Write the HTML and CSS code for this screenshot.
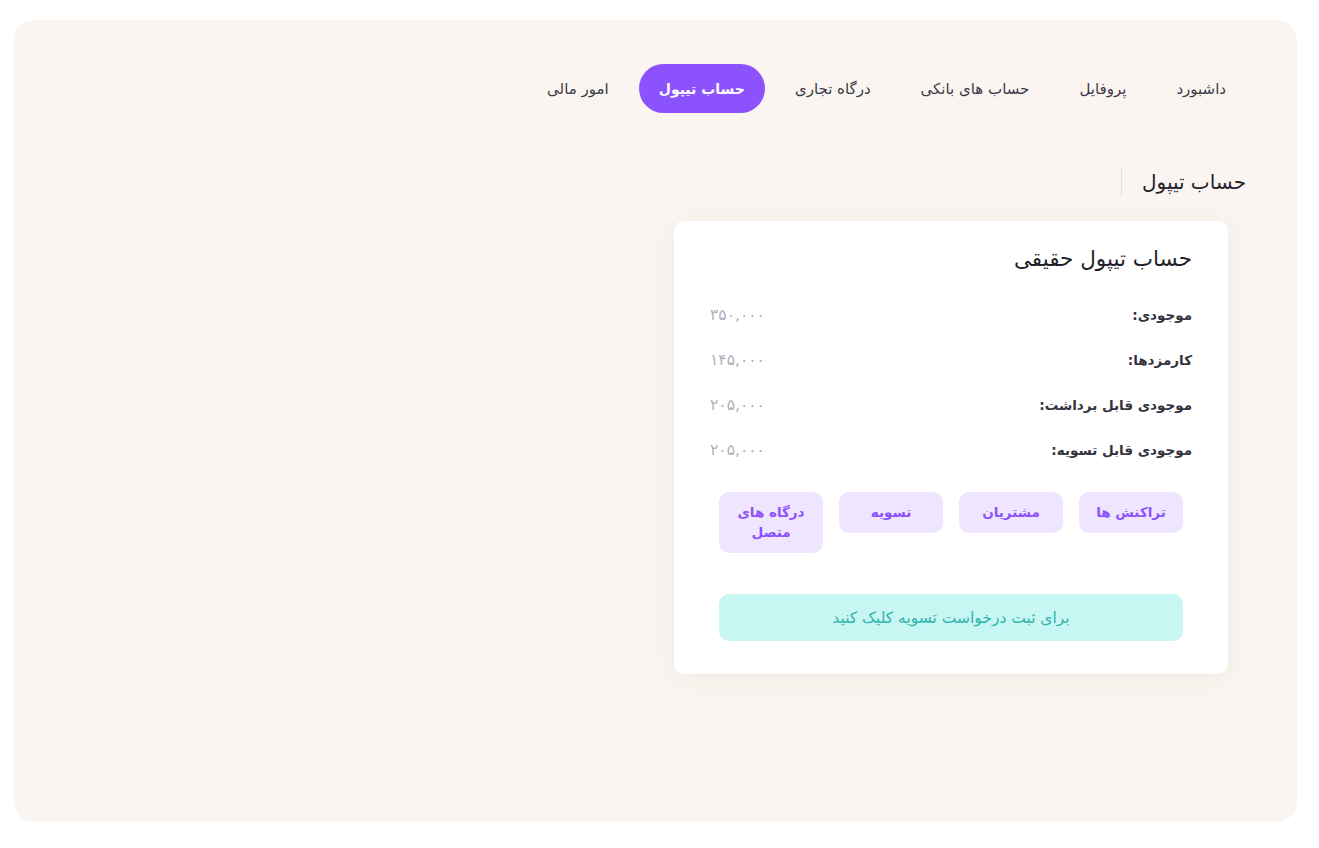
FILE: index.html
```html
<!DOCTYPE html>
<html lang="fa" dir="rtl">
<head>
<meta charset="utf-8">
<title>حساب تیپول</title>
<link rel="stylesheet" href="styles.css">
</head>
<body>
<div class="panel">
  <nav class="nav">
    <a class="nav-item">داشبورد</a>
    <a class="nav-item">پروفایل</a>
    <a class="nav-item">حساب های بانکی</a>
    <a class="nav-item">درگاه تجاری</a>
    <a class="nav-item active">حساب تیپول</a>
    <a class="nav-item">امور مالی</a>
  </nav>
  <div class="heading">حساب تیپول</div>
  <section class="card">
    <h2 class="card-title">حساب تیپول حقیقی</h2>
    <div class="rows">
      <div class="row"><span class="label">موجودی:</span><span class="value">۳۵۰,۰۰۰</span></div>
      <div class="row"><span class="label">کارمزدها:</span><span class="value">۱۴۵,۰۰۰</span></div>
      <div class="row"><span class="label">موجودی قابل برداشت:</span><span class="value">۲۰۵,۰۰۰</span></div>
      <div class="row"><span class="label">موجودی قابل تسویه:</span><span class="value">۲۰۵,۰۰۰</span></div>
    </div>
    <div class="actions">
      <button class="action">تراکنش ها</button>
      <button class="action">مشتریان</button>
      <button class="action">تسویه</button>
      <button class="action">درگاه های متصل</button>
    </div>
    <button class="settle">برای ثبت درخواست تسویه کلیک کنید</button>
  </section>
</div>
</body>
</html>
```
FILE: styles.css
```css
* { box-sizing: border-box; }
html, body { margin: 0; padding: 0; background: #ffffff; }
body {
  font-family: "DejaVu Sans", "Noto Sans", sans-serif;
  color: #333340;
}
.panel {
  margin: 20px 22px 0 14px;
  height: 802px;
  background: #faf5f0;
  border-radius: 20px;
  padding: 44px 51px 0 0;
  display: flex;
  flex-direction: column;
  align-items: flex-start;
}
.nav {
  display: flex;
  gap: 10px;
  height: 49px;
}
.nav-item {
  display: flex;
  align-items: center;
  padding: 0 20px;
  height: 49px;
  border-radius: 25px;
  font-size: 15px;
  color: #3b3b48;
  white-space: nowrap;
}
.nav-item.active {
  background: #8b52fd;
  color: #ffffff;
  font-weight: bold;
  font-size: 14px;
}
.heading {
  margin-top: 55px;
  padding-left: 20px;
  border-left: 1px solid #e6e1dc;
  line-height: 29px;
  font-size: 20px;
  color: #23232e;
}
.card {
  margin-top: 24px;
  margin-right: 18px;
  width: 554px;
  background: #ffffff;
  border-radius: 10px;
  box-shadow: 0 4px 30px rgba(120, 100, 80, 0.08);
  padding: 23px 36px 33px 36px;
}
.card-title {
  margin: 0;
  font-weight: normal;
  font-size: 21.5px;
  line-height: 30px;
  color: #1f1f2a;
}
.rows { margin-top: 18px; }
.row {
  display: flex;
  justify-content: space-between;
  align-items: center;
  height: 45px;
}
.label {
  font-size: 13.5px;
  font-weight: bold;
  color: #34343f;
}
.value {
  font-size: 15.5px;
  color: #b3afba;
}
.actions {
  margin-top: 20px;
  padding: 0 9px;
  display: grid;
  grid-template-columns: repeat(4, 104px);
  gap: 16px;
  align-items: start;
}
.action {
  font-family: inherit;
  border: none;
  background: #efe5fe;
  color: #8b52fd;
  font-weight: bold;
  font-size: 13.5px;
  line-height: 20px;
  padding: 10px 8px 11px;
  border-radius: 10px;
}
.settle {
  display: block;
  margin: 41px 9px 0;
  width: calc(100% - 18px);
  height: 47px;
  border: none;
  border-radius: 10px;
  background: #c8f6f2;
  color: #2eb5ad;
  font-family: inherit;
  font-size: 15.5px;
}
```
